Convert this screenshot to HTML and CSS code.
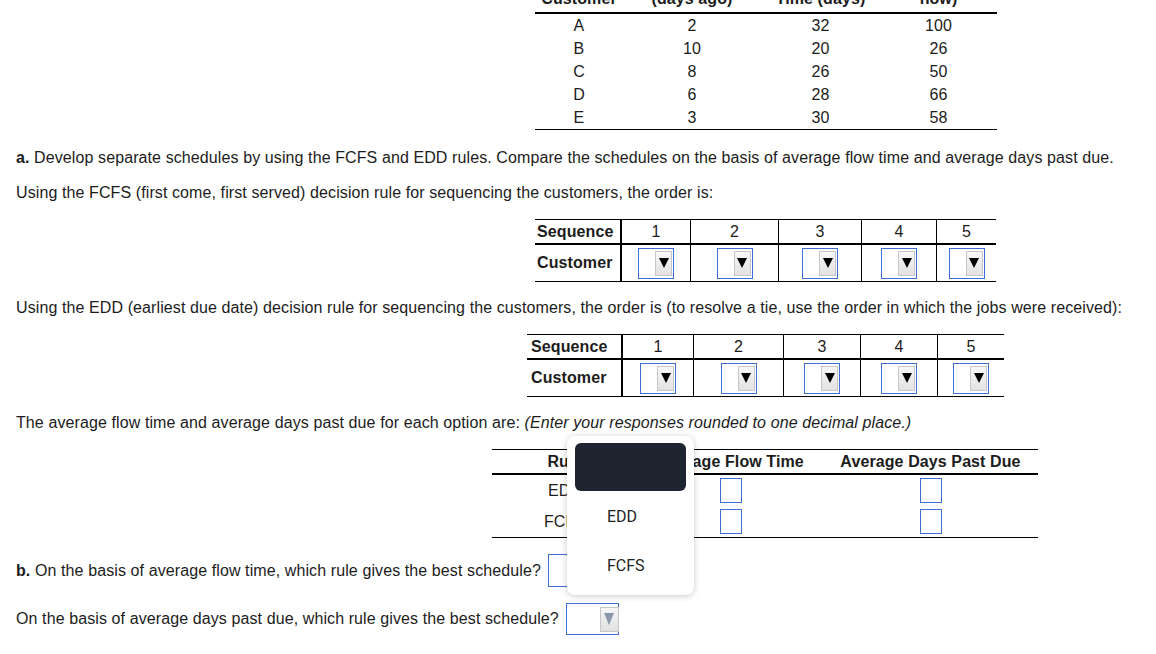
FILE: index.html
```html
<!DOCTYPE html>
<html>
<head>
<meta charset="utf-8">
<title>Scheduling</title>
<link rel="stylesheet" href="styles.css">
</head>
<body>
<div class="page">
  <div class="data-table">
    <div class="hd">Customer</div>
    <div class="hd">Order Received<br>(days ago)</div>
    <div class="hd">Processing<br>Time (days)</div>
    <div class="hd">Due Date<br>(days from<br>now)</div>
    <div class="dc">A</div><div class="dc">2</div><div class="dc">32</div><div class="dc">100</div>
    <div class="dc">B</div><div class="dc">10</div><div class="dc">20</div><div class="dc">26</div>
    <div class="dc">C</div><div class="dc">8</div><div class="dc">26</div><div class="dc">50</div>
    <div class="dc">D</div><div class="dc">6</div><div class="dc">28</div><div class="dc">66</div>
    <div class="dc">E</div><div class="dc">3</div><div class="dc">30</div><div class="dc">58</div>
  </div>

  <p class="q q-a"><b>a.</b> Develop separate schedules by using the FCFS and EDD rules. Compare the schedules on the basis of average flow time and average days past due.</p>
  <p class="q q-gap">Using the FCFS (first come, first served) decision rule for sequencing the customers, the order is:</p>

  <div class="seq seq-1">
    <div class="lbl">Sequence</div>
    <div class="num">1</div><div class="num">2</div><div class="num">3</div><div class="num">4</div><div class="num last">5</div>
    <div class="lbl lbl-b">Customer</div>
    <div class="slot"><span class="sel"><span class="btn"><svg width="10" height="10" viewBox="0 0 10 10"><polygon points="0,0 10,0 5,10" fill="#000"/></svg></span></span></div>
    <div class="slot"><span class="sel"><span class="btn"><svg width="10" height="10" viewBox="0 0 10 10"><polygon points="0,0 10,0 5,10" fill="#000"/></svg></span></span></div>
    <div class="slot"><span class="sel"><span class="btn"><svg width="10" height="10" viewBox="0 0 10 10"><polygon points="0,0 10,0 5,10" fill="#000"/></svg></span></span></div>
    <div class="slot"><span class="sel"><span class="btn"><svg width="10" height="10" viewBox="0 0 10 10"><polygon points="0,0 10,0 5,10" fill="#000"/></svg></span></span></div>
    <div class="slot last"><span class="sel"><span class="btn"><svg width="10" height="10" viewBox="0 0 10 10"><polygon points="0,0 10,0 5,10" fill="#000"/></svg></span></span></div>
  </div>

  <p class="q q-gap2">Using the EDD (earliest due date) decision rule for sequencing the customers, the order is (to resolve a tie, use the order in which the jobs were received):</p>

  <div class="seq seq-2">
    <div class="lbl">Sequence</div>
    <div class="num">1</div><div class="num">2</div><div class="num">3</div><div class="num">4</div><div class="num last">5</div>
    <div class="lbl lbl-b">Customer</div>
    <div class="slot"><span class="sel"><span class="btn"><svg width="10" height="10" viewBox="0 0 10 10"><polygon points="0,0 10,0 5,10" fill="#000"/></svg></span></span></div>
    <div class="slot"><span class="sel"><span class="btn"><svg width="10" height="10" viewBox="0 0 10 10"><polygon points="0,0 10,0 5,10" fill="#000"/></svg></span></span></div>
    <div class="slot"><span class="sel"><span class="btn"><svg width="10" height="10" viewBox="0 0 10 10"><polygon points="0,0 10,0 5,10" fill="#000"/></svg></span></span></div>
    <div class="slot"><span class="sel"><span class="btn"><svg width="10" height="10" viewBox="0 0 10 10"><polygon points="0,0 10,0 5,10" fill="#000"/></svg></span></span></div>
    <div class="slot last"><span class="sel"><span class="btn"><svg width="10" height="10" viewBox="0 0 10 10"><polygon points="0,0 10,0 5,10" fill="#000"/></svg></span></span></div>
  </div>

  <p class="q q-gap2">The average flow time and average days past due for each option are: <i>(Enter your responses rounded to one decimal place.)</i></p>

  <div class="rules">
    <div class="rh">Rule</div><div class="rh">Average Flow Time</div><div class="rh">Average Days Past Due</div>
    <div class="rc">EDD</div><div class="rc"><span class="inp"></span></div><div class="rc"><span class="inp"></span></div>
    <div class="rc">FCFS</div><div class="rc"><span class="inp"></span></div><div class="rc"><span class="inp"></span></div>
  </div>

  <div class="ask ask-b">
    <span><b>b.</b> On the basis of average flow time, which rule gives the best schedule?</span>
    <span class="pick-wrap">
      <span class="pick pick-tall"><span class="pbtn"><svg width="10" height="12" viewBox="0 0 10 12"><polygon points="0,0 10,0 5,12" fill="#8d97ac"/></svg></span></span>
      <div class="menu">
        <div class="opt opt-active"></div>
        <div class="opt">EDD</div>
        <div class="opt">FCFS</div>
      </div>
    </span>
  </div>

  <div class="ask ask-c">
    <span>On the basis of average days past due, which rule gives the best schedule?</span>
    <span class="pick"><span class="pbtn"><svg width="10" height="12" viewBox="0 0 10 12"><polygon points="0,0 10,0 5,12" fill="#8d97ac"/></svg></span></span>
  </div>
</div>
</body>
</html>
```

FILE: styles.css
```css
html, body {
  margin: 0;
  padding: 0;
  background: #ffffff;
}

body {
  font-family: "Liberation Sans", Arial, sans-serif;
  font-size: 16px;
  letter-spacing: 0.1px;
  color: #1c1c1c;
  overflow: hidden;
}

.page {
  padding: 0 16px;
}

/* top data table */
.data-table {
  display: grid;
  grid-template-columns: 88px 138px 119px 117px;
  width: 462px;
  margin-left: 519px;
  margin-top: -42px;
  border-bottom: 1px solid #000;
}

.hd {
  box-sizing: border-box;
  height: 56px;
  padding-bottom: 5px;
  border-bottom: 2px solid #000;
  font-weight: bold;
  line-height: 17px;
  text-align: center;
  display: flex;
  align-items: flex-end;
  justify-content: center;
}

.dc {
  height: 23px;
  line-height: 23px;
  text-align: center;
}

/* paragraphs */
.q {
  margin: 0;
  line-height: 20px;
}

.q-a { margin-top: 18px; }
.q-gap { margin-top: 15px; }
.q-gap2 { margin-top: 16px; }

/* sequence tables */
.seq {
  display: grid;
  grid-template-rows: 23px 38px;
  border-top: 1px solid #000;
  border-bottom: 1px solid #000;
  margin-top: 16px;
}

.seq-1 {
  grid-template-columns: 87px 69px 88px 83px 75px 59px;
  width: 461px;
  margin-left: 519px;
}

.seq-2 {
  grid-template-columns: 96px 71px 90px 77px 77px 66px;
  width: 477px;
  margin-left: 511px;
  margin-top: 16px;
}

.lbl {
  box-sizing: border-box;
  border-right: 2px solid #000;
  font-weight: bold;
  display: flex;
  align-items: center;
  padding-left: 2px;
}

.seq-2 .lbl { padding-left: 4px; }

.lbl-b {
  border-top: 2px solid #000;
}

.num {
  box-sizing: border-box;
  border-right: 1px solid #000;
  display: flex;
  align-items: center;
  justify-content: center;
}

.slot {
  box-sizing: border-box;
  border-right: 1px solid #000;
  border-top: 2px solid #000;
  display: flex;
  align-items: center;
  justify-content: center;
}

.num.last, .slot.last { border-right: none; }

.sel {
  box-sizing: border-box;
  width: 36px;
  height: 31px;
  border: 1px solid #3d6ed2;
  display: flex;
  align-items: center;
  justify-content: flex-end;
  padding-right: 1px;
  background: #fff;
}

.btn {
  box-sizing: border-box;
  width: 17px;
  height: 25px;
  border: 1px solid #c6c6c6;
  background: linear-gradient(#f8f8f8, #e2e2e2);
  display: flex;
  align-items: center;
  justify-content: center;
}

/* rules table */
.rules {
  display: grid;
  grid-template-columns: 146px 185px 215px;
  width: 546px;
  margin-left: 476px;
  margin-top: 16px;
  border-top: 1px solid #000;
  border-bottom: 1px solid #000;
}

.rh {
  box-sizing: border-box;
  height: 25px;
  border-bottom: 2px solid #000;
  font-weight: bold;
  display: flex;
  align-items: center;
  justify-content: center;
}

.rc {
  height: 31px;
  display: flex;
  align-items: center;
  justify-content: center;
}

.inp {
  box-sizing: border-box;
  width: 22px;
  height: 25px;
  border: 1px solid #3d6ed2;
  background: #fff;
}

/* questions b */
.ask {
  display: flex;
  align-items: center;
  gap: 7px;
  margin-top: 16px;
}

.pick-wrap {
  position: relative;
  display: flex;
}

.pick {
  box-sizing: border-box;
  width: 53px;
  height: 32px;
  border: 1px solid #3d6ed2;
  display: flex;
  align-items: center;
  justify-content: flex-end;
  background: #fff;
}

.pick-tall { height: 33px; }

.pbtn {
  box-sizing: border-box;
  width: 19px;
  height: 25px;
  margin-right: -1px;
  border: 1px solid #c6c6c6;
  background: linear-gradient(#f6f6f6, #e0e0e0);
  display: flex;
  align-items: center;
  justify-content: center;
}

/* dropdown menu overlay */
.menu {
  position: absolute;
  left: 19px;
  top: -118px;
  box-sizing: border-box;
  width: 127px;
  height: 159px;
  padding: 7px 8px 6px;
  background: #fff;
  border-radius: 8px;
  box-shadow: 0 1px 6px rgba(0, 0, 0, 0.22);
  display: flex;
  flex-direction: column;
  gap: 1px;
  font-family: Roboto, "Liberation Sans", sans-serif;
  font-size: 16px;
  letter-spacing: 0;
  color: #1f1f1f;
  z-index: 5;
}

.opt {
  height: 48px;
  flex: none;
  display: flex;
  align-items: center;
  padding-left: 32px;
}

.opt-active {
  background: #1e2430;
  border-radius: 6px;
}
```
